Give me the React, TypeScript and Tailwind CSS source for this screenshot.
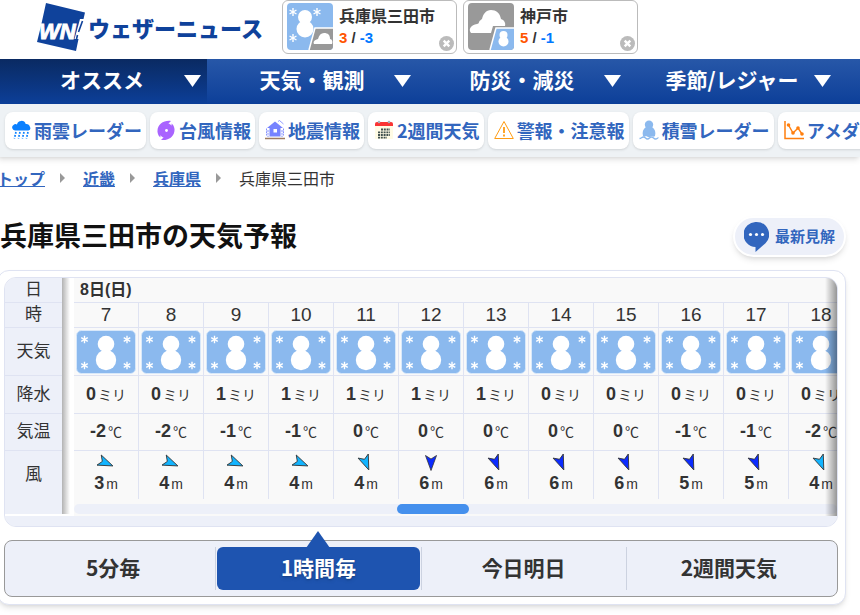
import React, { FunctionComponent, ReactNode } from "react";

type Wind = { angle: number; speed: number };

interface IHour {
  hour: number;
  rain: number;
  temp: number;
  wind: Wind;
}

interface ICityProps {
  name: string;
  high: number;
  low: number;
  icon: ReactNode;
}

const hours: IHour[] = [
  { hour: 7, rain: 0, temp: -2, wind: { angle: -67, speed: 3 } },
  { hour: 8, rain: 0, temp: -2, wind: { angle: -67, speed: 4 } },
  { hour: 9, rain: 1, temp: -1, wind: { angle: -67, speed: 4 } },
  { hour: 10, rain: 1, temp: -1, wind: { angle: -67, speed: 4 } },
  { hour: 11, rain: 1, temp: 0, wind: { angle: -22, speed: 4 } },
  { hour: 12, rain: 1, temp: 0, wind: { angle: 0, speed: 6 } },
  { hour: 13, rain: 1, temp: 0, wind: { angle: -22, speed: 6 } },
  { hour: 14, rain: 0, temp: 0, wind: { angle: -22, speed: 6 } },
  { hour: 15, rain: 0, temp: 0, wind: { angle: -22, speed: 6 } },
  { hour: 16, rain: 0, temp: -1, wind: { angle: -22, speed: 5 } },
  { hour: 17, rain: 0, temp: -1, wind: { angle: -22, speed: 5 } },
  { hour: 18, rain: 0, temp: -2, wind: { angle: -22, speed: 4 } },
];

const Flake = ({ x, y, r = 4 }: { x: number; y: number; r?: number }) => (
  <g transform={`translate(${x} ${y})`} stroke="#fff" strokeWidth="1.4">
    <path d={`M0 ${-r}V${r}`} />
    <path d={`M0 ${-r}V${r}`} transform="rotate(60)" />
    <path d={`M0 ${-r}V${r}`} transform="rotate(-60)" />
  </g>
);

const SnowIcon = () => (
  <svg viewBox="0 0 60 44" className="mx-auto block h-11 w-[60px]" role="img" aria-label="雪">
    <rect x="0.5" y="0.5" width="59" height="43" rx="5" fill="#8bb9ee" stroke="#d8e8fa" />
    <circle cx="30" cy="14" r="8.3" fill="#fff" />
    <circle cx="30" cy="30" r="10.2" fill="#fff" />
    <Flake x={8.5} y={9.5} r={3.8} />
    <Flake x={51} y={9.5} r={3.8} />
    <Flake x={8.5} y={35.5} r={3.8} />
    <Flake x={51} y={35.5} r={3.8} />
  </svg>
);

const SnowThenCloud = () => (
  <svg viewBox="0 0 46 47" className="h-[47px] w-[46px]" role="img" aria-label="雪のちくもり">
    <rect width="46" height="47" rx="4" fill="#8bb9ee" />
    <circle cx="18" cy="14" r="7" fill="#fff" />
    <circle cx="18" cy="26" r="8.5" fill="#fff" />
    <Flake x={6} y={9} />
    <Flake x={30} y={9} />
    <Flake x={6} y={35} />
    <path d="M28 25h18v18a4 4 0 0 1-4 4H22z" fill="#999" />
    <path d="M46 25H28l-6 22" fill="none" stroke="#fff" strokeWidth="1.5" />
    <path d="M27 41c-1-2 0-4 4-5 1-4 3-6 6-6 4 0 6 2 6 6 2 0 3 3 2 5z" fill="#fff" />
  </svg>
);

const CloudThenSnow = () => (
  <svg viewBox="0 0 46 47" className="h-[47px] w-[46px]" role="img" aria-label="くもりのち雪">
    <rect width="46" height="47" rx="4" fill="#999" />
    <path d="M3 30c-3-4 0-8 6-9 1 0 2-1 2-2 1-2 2-2 3-3 1-5 4-9 9-9s9 3 10 9c3 1 5 4 4 7H25l-2 7z" fill="#fff" />
    <path d="M28 25h18v18a4 4 0 0 1-4 4H22z" fill="#8bb9ee" />
    <path d="M46 25H28l-6 22" fill="none" stroke="#fff" strokeWidth="1.5" />
    <circle cx="35.500" cy="32" r="4" fill="#fff" />
    <circle cx="35.500" cy="38.500" r="5" fill="#fff" />
  </svg>
);

const WindArrow: FunctionComponent<Wind & { strong: boolean }> = ({ angle, strong }) => (
  <svg viewBox="-9 -9 18 18" className="mx-auto block h-[18px] w-[18px]" aria-hidden="true">
    <path
      d="M-5.500 -7.500L0 -4L5.500 -7.500L0 7.500Z"
      transform={`rotate(${angle})`}
      fill={strong ? "#0b2bff" : "#12b4ff"}
      stroke="#333"
      strokeWidth="0.800"
    />
  </svg>
);

const Logo = () => (
  <a href="#" className="flex items-center" aria-label="ウェザーニュース">
    <svg viewBox="0 0 50 50" className="h-[50px] w-[50px]" aria-hidden="true">
      <path d="M10 1L49 10.500L47.500 17L44 17L38.500 37H42.500L40 49L1 40L4.500 26z" fill="#0f429b" />
      <text
        x="3"
        y="37"
        fontSize="22"
        fontWeight="700"
        fontStyle="italic"
        fontFamily="Liberation Sans, sans-serif"
        fill="#fff"
        stroke="#fff"
        strokeWidth="1"
      >
        WN
      </text>
      <path d="M46.500 19l-4 11M41.500 33l-1 4" stroke="#0f429b" strokeWidth="1.600" />
    </svg>
    <span className="pl-0.5 text-[22px] leading-8 font-black text-[#0f429b]">ウェザーニュース</span>
  </a>
);

const CityCard: FunctionComponent<ICityProps> = ({ name, high, low, icon }) => (
  <div className="relative flex h-[54px] w-[175px] gap-1.5 rounded-md border border-[#bbb] bg-white pt-0.5 pl-1">
    {icon}
    <div>
      <a href="#" className="block text-base leading-6 font-bold text-[#333]">{name}</a>
      <p className="font-[Liberation_Sans] text-[15px] leading-[22px] font-bold text-[#333]">
        <span className="text-[#ff5500]">{high}</span> / <span className="text-[#0078ff]">{low}</span>
      </p>
    </div>
    <button type="button" aria-label={`${name}を削除`} className="absolute right-0.5 bottom-0.5">
      <svg viewBox="0 0 15 15" className="h-[15px] w-[15px]">
        <circle cx="7.500" cy="7.500" r="7.500" fill="#bbb" />
        <path d="M4.700 4.700l5.600 5.600M10.300 4.700l-5.600 5.600" stroke="#fff" strokeWidth="2.400" />
      </svg>
    </button>
  </div>
);

const RainIcon = () => (
  <svg viewBox="0 0 20 20" className="h-5 w-5">
    <path d="M4 10.500a3 3 0 0 1-1.500-5.500A3 3 0 0 1 6 4.500a4.500 4.500 0 0 1 8.700-.5A4 4 0 0 1 19 7a2.500 2.500 0 0 1-1.500 3.500z" fill="#0a80ff" />
    <path d="M5 12l-1.600 6.500M9 12l-1.600 6.500M13 12l-1.600 6.500M17 12l-1.600 6.500" stroke="#0a80ff" strokeWidth="1.700" strokeDasharray="1.800 1.300" />
  </svg>
);

const TyphoonIcon = () => (
  <svg viewBox="0 0 20 20" className="h-5 w-5">
    <circle cx="10" cy="10.500" r="7.600" fill="#a964ff" />
    <path d="M15 1C8 0 1 4 1.500 12c.3 3 2 5 3 5.500C3.500 9 7 5 12 4zM5 20c7 1 14-3 13.500-11-.3-3-2-5-3-5.500C16.500 12 13 16 8 17z" fill="#a964ff" />
    <circle cx="10.500" cy="10.500" r="1.400" fill="#fff" />
  </svg>
);

const QuakeIcon = () => (
  <svg viewBox="0 0 20 20" className="h-5 w-5">
    <path d="M10 1.500L2 8h2.500v8.500h11V8H18z" fill="#7683ff" />
    <path d="M8.500 9h3.500v3.500H8.500z" fill="#fff" />
    <path d="M1.500 8.500v7M3 10v7M17 10v7M18.500 8.500v7" stroke="#7683ff" strokeWidth="0.900" strokeDasharray="2 0.800" />
    <path d="M13 1.500l1.500-1 4 3.500" fill="none" stroke="#7683ff" strokeWidth="0.800" />
    <path d="M0 18.500h20" stroke="#9c7b63" strokeWidth="1.500" />
  </svg>
);

const CalendarIcon = () => (
  <svg viewBox="0 0 20 20" className="h-5 w-5">
    <path d="M1 6h18v13H1z" fill="#fffbe5" />
    <path d="M1 6V4q0-2 2-2h14q2 0 2 2v2z" fill="#fa3434" />
    <circle cx="5" cy="2" r="1.300" fill="#a5b5bd" />
    <circle cx="15" cy="2" r="1.300" fill="#a5b5bd" />
    <path d="M7 9.500h9M4 12.300h12M4 15h12M4 17.700h9" stroke="#40504e" strokeWidth="1.800" strokeDasharray="2 0.800" />
  </svg>
);

const WarningIcon = () => (
  <svg viewBox="0 0 20 20" className="h-5 w-5">
    <path d="M10 1.500L19.300 18.500H.7z" fill="none" stroke="#ff9c13" strokeLinejoin="round" />
    <path d="M10 7v6M10 14.500v2" stroke="#ff9c13" strokeWidth="1.800" />
  </svg>
);

const SnowDepthIcon = () => (
  <svg viewBox="0 0 20 20" className="h-5 w-5">
    <circle cx="10" cy="4.700" r="4.200" fill="#8bb9ee" />
    <path d="M7 7h6c3 2 4 5 3 9-1 1-2 1-3 0-2 1.500-4 1.500-6 0-1 1-2 1-3 0-1-4 0-7 3-9z" fill="#8bb9ee" />
    <path d="M.5 18.500c2 0 2-1.500 4-1.500s2 2 4 2 2-2 4-2 2 2 4 2 2-1.500 3-1" fill="none" stroke="#8bb9ee" strokeWidth="1.300" />
  </svg>
);

const ChartIcon = () => (
  <svg viewBox="0 0 20 20" className="h-5 w-5">
    <path d="M1 1v17.500h19" fill="none" stroke="#ff7f0e" strokeWidth="1.500" />
    <path d="M4.500 5L9 13l5-5 4 6" fill="none" stroke="#ff7f0e" strokeWidth="1.400" />
    <g fill="#ff7f0e">
      <circle cx="4.500" cy="5" r="1.800" />
      <circle cx="9" cy="13" r="1.800" />
      <circle cx="14" cy="8" r="1.800" />
      <circle cx="18" cy="14" r="1.800" />
    </g>
  </svg>
);

const menus = ["オススメ", "天気・観測", "防災・減災", "季節/レジャー"];

const shortcuts = [
  { text: "雨雲レーダー", icon: <RainIcon /> },
  { text: "台風情報", icon: <TyphoonIcon /> },
  { text: "地震情報", icon: <QuakeIcon /> },
  { text: "2週間天気", icon: <CalendarIcon /> },
  { text: "警報・注意報", icon: <WarningIcon /> },
  { text: "積雪レーダー", icon: <SnowDepthIcon /> },
  { text: "アメダス", icon: <ChartIcon /> },
];

const crumbs = ["トップ", "近畿", "兵庫県"];

const tabs = ["5分毎", "1時間毎", "今日明日", "2週間天気"];

const RowLabel = ({ children }: { children: ReactNode }) => (
  <th scope="row" className="border-b border-[#dfe3f2] bg-[#edf0f9] p-0 text-[17px] leading-6 font-normal">
    {children}
  </th>
);

const Spacer = () => <td className="bg-white p-0"></td>;

const cell = "border-r border-b border-[#dfe3f2] p-0 text-center";

const Value = ({ value, unit }: { value: number; unit: string }) => (
  <span className="inline-flex items-baseline gap-0.5 pb-0.5 leading-5">
    <b className="text-lg leading-5">{value}</b>
    <span className="text-sm leading-5">{unit}</span>
  </span>
);

const ForecastTable = () => (
  <div className="relative overflow-hidden rounded-xl border border-[#dfe3f2] bg-[#f9f9f9]">
    <table className="w-[849px] table-fixed border-separate border-spacing-0 font-[Liberation_Sans,Noto_Sans_CJK_JP]">
      <colgroup>
        <col className="w-[57px]" />
        <col className="w-3" />
        {hours.map((h) => (
          <col key={h.hour} className="w-[65px]" />
        ))}
      </colgroup>
      <tbody>
        <tr className="h-[25px]">
          <RowLabel>日</RowLabel>
          <Spacer />
          <td colSpan={12} className="border-b border-[#dfe3f2] p-0 pl-1.5 text-base leading-6 font-bold">8日(日)</td>
        </tr>
        <tr className="h-[25px]">
          <RowLabel>時</RowLabel>
          <Spacer />
          {hours.map((h) => (
            <td key={h.hour} className={`${cell} text-[19px] leading-6`}>{h.hour}</td>
          ))}
        </tr>
        <tr className="h-12">
          <RowLabel>天気</RowLabel>
          <Spacer />
          {hours.map((h) => (
            <td key={h.hour} className={cell}><SnowIcon /></td>
          ))}
        </tr>
        <tr className="h-[38px]">
          <RowLabel>降水</RowLabel>
          <Spacer />
          {hours.map((h) => (
            <td key={h.hour} className={cell}><Value value={h.rain} unit="ミリ" /></td>
          ))}
        </tr>
        <tr className="h-[37px]">
          <RowLabel>気温</RowLabel>
          <Spacer />
          {hours.map((h) => (
            <td key={h.hour} className={cell}><Value value={h.temp} unit="℃" /></td>
          ))}
        </tr>
        <tr className="h-12">
          <th scope="row" className="bg-[#edf0f9] p-0 text-[17px] leading-6 font-normal">風</th>
          <Spacer />
          {hours.map((h) => (
            <td key={h.hour} className="border-r border-[#dfe3f2] p-0 text-center">
              <WindArrow {...h.wind} strong={h.wind.speed > 4} />
              <Value value={h.wind.speed} unit="m" />
            </td>
          ))}
        </tr>
      </tbody>
    </table>
    <div className="flex h-[17px] bg-white">
      <div className="h-[15px] w-[57px] bg-[#edf0f9]"></div>
      <div className="ml-3 flex-1 bg-[#f9f9f9] pt-[5px]">
        <div className="h-2.5 rounded-full bg-[#edf0f9]">
          <div className="ml-[323px] h-2.5 w-[72px] rounded-full bg-[#4590ed]"></div>
        </div>
      </div>
    </div>
    {/* edge shadows of the scroll area */}
    <div className="absolute top-0 bottom-3 left-[57px] w-2 bg-linear-to-r from-black/30 to-transparent"></div>
    <div className="absolute top-0 right-0 bottom-2.5 w-3 bg-linear-to-l from-black/40 to-transparent"></div>
    <div className="h-2.5 bg-[#edf0f9]"></div>
  </div>
);

export default function App() {
  return (
    <div className="overflow-hidden bg-white font-[Noto_Sans_CJK_JP,sans-serif] text-[#333]">
      <div className="-ml-[3px]">
        <header className="flex h-[59px] items-start pl-[39px]">
          <div className="w-[246px] shrink-0 pt-0.5"><Logo /></div>
          <div className="flex gap-1.5">
            <CityCard name="兵庫県三田市" high={3} low={-3} icon={<SnowThenCloud />} />
            <CityCard name="神戸市" high={5} low={-1} icon={<CloudThenSnow />} />
          </div>
        </header>

        <nav className="flex h-[45px] bg-linear-to-b from-[#2757a8] to-[#0c3f99]">
          {menus.map((m, i) => (
            <button
              key={m}
              type="button"
              className={`relative w-[210px] shrink-0 pb-1.5 text-[21px] leading-8 font-bold text-white ${i === 0 ? "bg-linear-to-b from-[#0a2a62] to-[#0c3f99]" : ""}`}
            >
              {m}
              <svg viewBox="0 0 17 12" className="absolute top-4 right-1.5 h-3 w-[17px]" aria-hidden="true">
                <path d="M0 0h17L8.500 12z" fill="#fff" />
              </svg>
            </button>
          ))}
        </nav>

        <div className="relative flex h-[53px] gap-1 bg-[#eef2f5] pt-2 pl-2 shadow-md">
          {shortcuts.map((s) => (
            <a
              key={s.text}
              href="#"
              className="flex h-[37px] shrink-0 items-center gap-[3px] rounded-lg bg-white pr-1 pb-0.5 pl-1.5 text-lg font-bold whitespace-nowrap text-[#3266be] shadow"
            >
              {s.icon}
              <span className="leading-6">{s.text}</span>
            </a>
          ))}
        </div>

        <main className="pr-3.5 pb-2.5">
          <nav className="flex items-center pt-[9px] text-base leading-6">
            {crumbs.map((c) => (
              <span key={c} className="flex items-center">
                <a href="#" className="font-bold text-[#3266be] underline">{c}</a>
                <svg viewBox="0 0 5 10" className="mr-[18px] ml-[15px] h-2.5 w-[5px]" aria-hidden="true">
                  <path d="M0 0l5 5-5 5z" fill="#999" />
                </svg>
              </span>
            ))}
            <span>兵庫県三田市</span>
          </nav>

          <div className="flex items-center justify-between pt-[26px]">
            <h1 className="pb-1 pl-[3px] text-[27px] leading-9 font-bold text-[#111]">兵庫県三田市の天気予報</h1>
            <button
              type="button"
              className="flex h-[41px] items-center gap-1.5 rounded-full border-2 border-white bg-[#edf0f9] px-[9px] text-[15px] font-bold text-[#3266be] shadow-md"
            >
              <svg viewBox="0 0 25 30" className="h-[30px] w-[25px]" aria-hidden="true">
                <path d="M12.500 0a12.500 12.500 0 0 1 9 21.200L11.500 30v-5A12.500 12.500 0 0 1 12.500 0z" fill="#3266be" />
                <circle cx="6.500" cy="12.500" r="1.600" fill="#fff" />
                <circle cx="12.500" cy="12.500" r="1.600" fill="#fff" />
                <circle cx="18.500" cy="12.500" r="1.600" fill="#fff" />
              </svg>
              最新見解
            </button>
          </div>

          <section className="mt-[13px] rounded-xl border border-[#dfe3f2] bg-white pt-1.5 pr-[7px] pb-[7px] pl-1.5 shadow-md">
            <ForecastTable />
            <div className="mt-[13px] flex rounded-lg border border-[#999] bg-[#edf0f9] p-1.5" role="tablist">
              {tabs.map((t, i) => (
                <div key={t} className={`flex-1 px-px ${i < 3 ? "border-r border-[#ccd2e0]" : ""}`}>
                  <button
                    type="button"
                    role="tab"
                    aria-selected={i === 1}
                    className={`relative block h-[43px] w-full rounded-md pb-1 text-[21px] leading-8 font-bold ${i === 1 ? "bg-[#1e54b0] text-white text-shadow-md" : ""}`}
                  >
                    {i === 1 && (
                      <svg viewBox="0 0 24 17" className="absolute -top-4 left-1/2 h-[17px] w-6 -translate-x-1/2" aria-hidden="true">
                        <path d="M12 0l12 17H0z" fill="#1e54b0" />
                      </svg>
                    )}
                    {t}
                  </button>
                </div>
              ))}
            </div>
          </section>
        </main>
      </div>
    </div>
  );
}
